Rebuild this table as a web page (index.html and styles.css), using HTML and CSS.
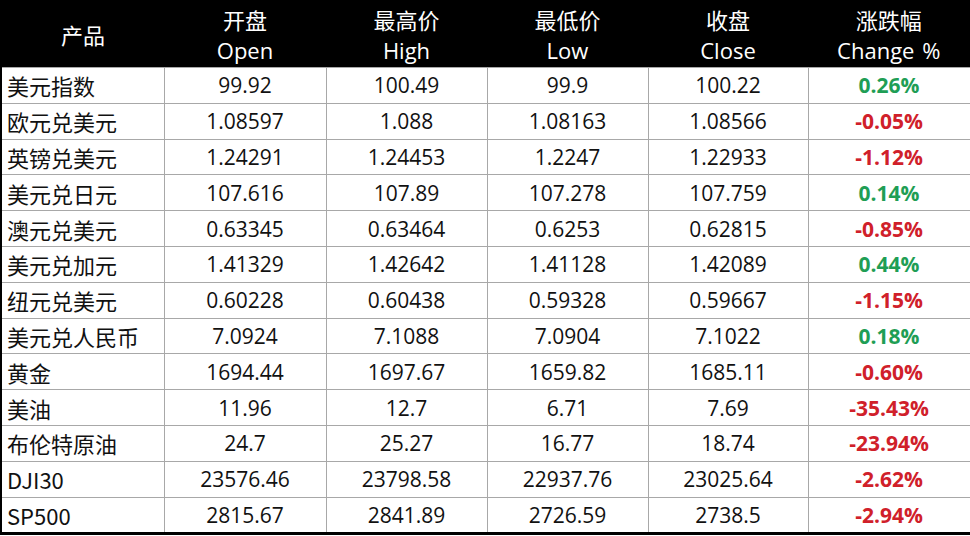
FILE: index.html
```html
<!DOCTYPE html>
<html lang="zh">
<head>
<meta charset="utf-8">
<title>行情</title>
<link rel="stylesheet" href="styles.css">
</head>
<body>
<table class="quotes">
  <colgroup>
    <col class="c1"><col class="c2"><col class="c3"><col class="c4"><col class="c5"><col class="c6">
  </colgroup>
  <thead>
    <tr class="head">
      <th>产品</th>
      <th>开盘<br>Open</th>
      <th>最高价<br>High</th>
      <th>最低价<br>Low</th>
      <th>收盘<br>Close</th>
      <th class="wide">涨跌幅<br>Change %</th>
    </tr>
  </thead>
  <tbody>
    <tr><td class="name">美元指数</td><td>99.92</td><td>100.49</td><td>99.9</td><td>100.22</td><td class="up">0.26%</td></tr>
    <tr><td class="name">欧元兑美元</td><td>1.08597</td><td>1.088</td><td>1.08163</td><td>1.08566</td><td class="down">-0.05%</td></tr>
    <tr><td class="name">英镑兑美元</td><td>1.24291</td><td>1.24453</td><td>1.2247</td><td>1.22933</td><td class="down">-1.12%</td></tr>
    <tr><td class="name">美元兑日元</td><td>107.616</td><td>107.89</td><td>107.278</td><td>107.759</td><td class="up">0.14%</td></tr>
    <tr><td class="name">澳元兑美元</td><td>0.63345</td><td>0.63464</td><td>0.6253</td><td>0.62815</td><td class="down">-0.85%</td></tr>
    <tr><td class="name">美元兑加元</td><td>1.41329</td><td>1.42642</td><td>1.41128</td><td>1.42089</td><td class="up">0.44%</td></tr>
    <tr><td class="name">纽元兑美元</td><td>0.60228</td><td>0.60438</td><td>0.59328</td><td>0.59667</td><td class="down">-1.15%</td></tr>
    <tr><td class="name">美元兑人民币</td><td>7.0924</td><td>7.1088</td><td>7.0904</td><td>7.1022</td><td class="up">0.18%</td></tr>
    <tr><td class="name">黄金</td><td>1694.44</td><td>1697.67</td><td>1659.82</td><td>1685.11</td><td class="down">-0.60%</td></tr>
    <tr><td class="name">美油</td><td>11.96</td><td>12.7</td><td>6.71</td><td>7.69</td><td class="down">-35.43%</td></tr>
    <tr><td class="name">布伦特原油</td><td>24.7</td><td>25.27</td><td>16.77</td><td>18.74</td><td class="down">-23.94%</td></tr>
    <tr><td class="name">DJI30</td><td>23576.46</td><td>23798.58</td><td>22937.76</td><td>23025.64</td><td class="down">-2.62%</td></tr>
    <tr><td class="name">SP500</td><td>2815.67</td><td>2841.89</td><td>2726.59</td><td>2738.5</td><td class="down">-2.94%</td></tr>
  </tbody>
</table>
</body>
</html>
```

FILE: styles.css
```css
html, body {
  margin: 0;
  padding: 0;
  background: #ffffff;
}

.quotes {
  width: 970px;
  table-layout: fixed;
  border-collapse: collapse;
  font-family: "Open Sans", "Noto Sans CJK SC", sans-serif;
  color: #111111;
  border-left: 2px solid #000;
  border-right: 3px solid #000;
  border-bottom: 3px solid #000;
}

.c1 { width: 163px; }
.c2 { width: 162px; }
.c3 { width: 161px; }
.c4 { width: 161px; }
.c5 { width: 160px; }
.c6 { width: 163px; }

.head th {
  height: 64px;
  padding: 3px 0 0 0;
  background: #000;
  color: #fff;
  font-weight: normal;
  font-size: 22px;
  line-height: 30px;
  text-align: center;
  vertical-align: middle;
}

.head th.wide {
  word-spacing: 2px;
}

tbody td {
  height: 34.8px;
  padding: 0;
  font-size: 21px;
  line-height: 26px;
  text-align: center;
  vertical-align: middle;
  border-top: 1px solid #a8a8a8;
  border-left: 1px solid #a8a8a8;
  white-space: nowrap;
}

tbody td.name {
  text-align: left;
  padding-left: 5px;
  font-family: "Noto Sans CJK SC", "Open Sans", sans-serif;
  font-size: 22px;
  border-left: none;
}

tbody td.up,
tbody td.down {
  font-weight: bold;
}

tbody td.up { color: #1f9e55; }
tbody td.down { color: #d0202a; }
```
